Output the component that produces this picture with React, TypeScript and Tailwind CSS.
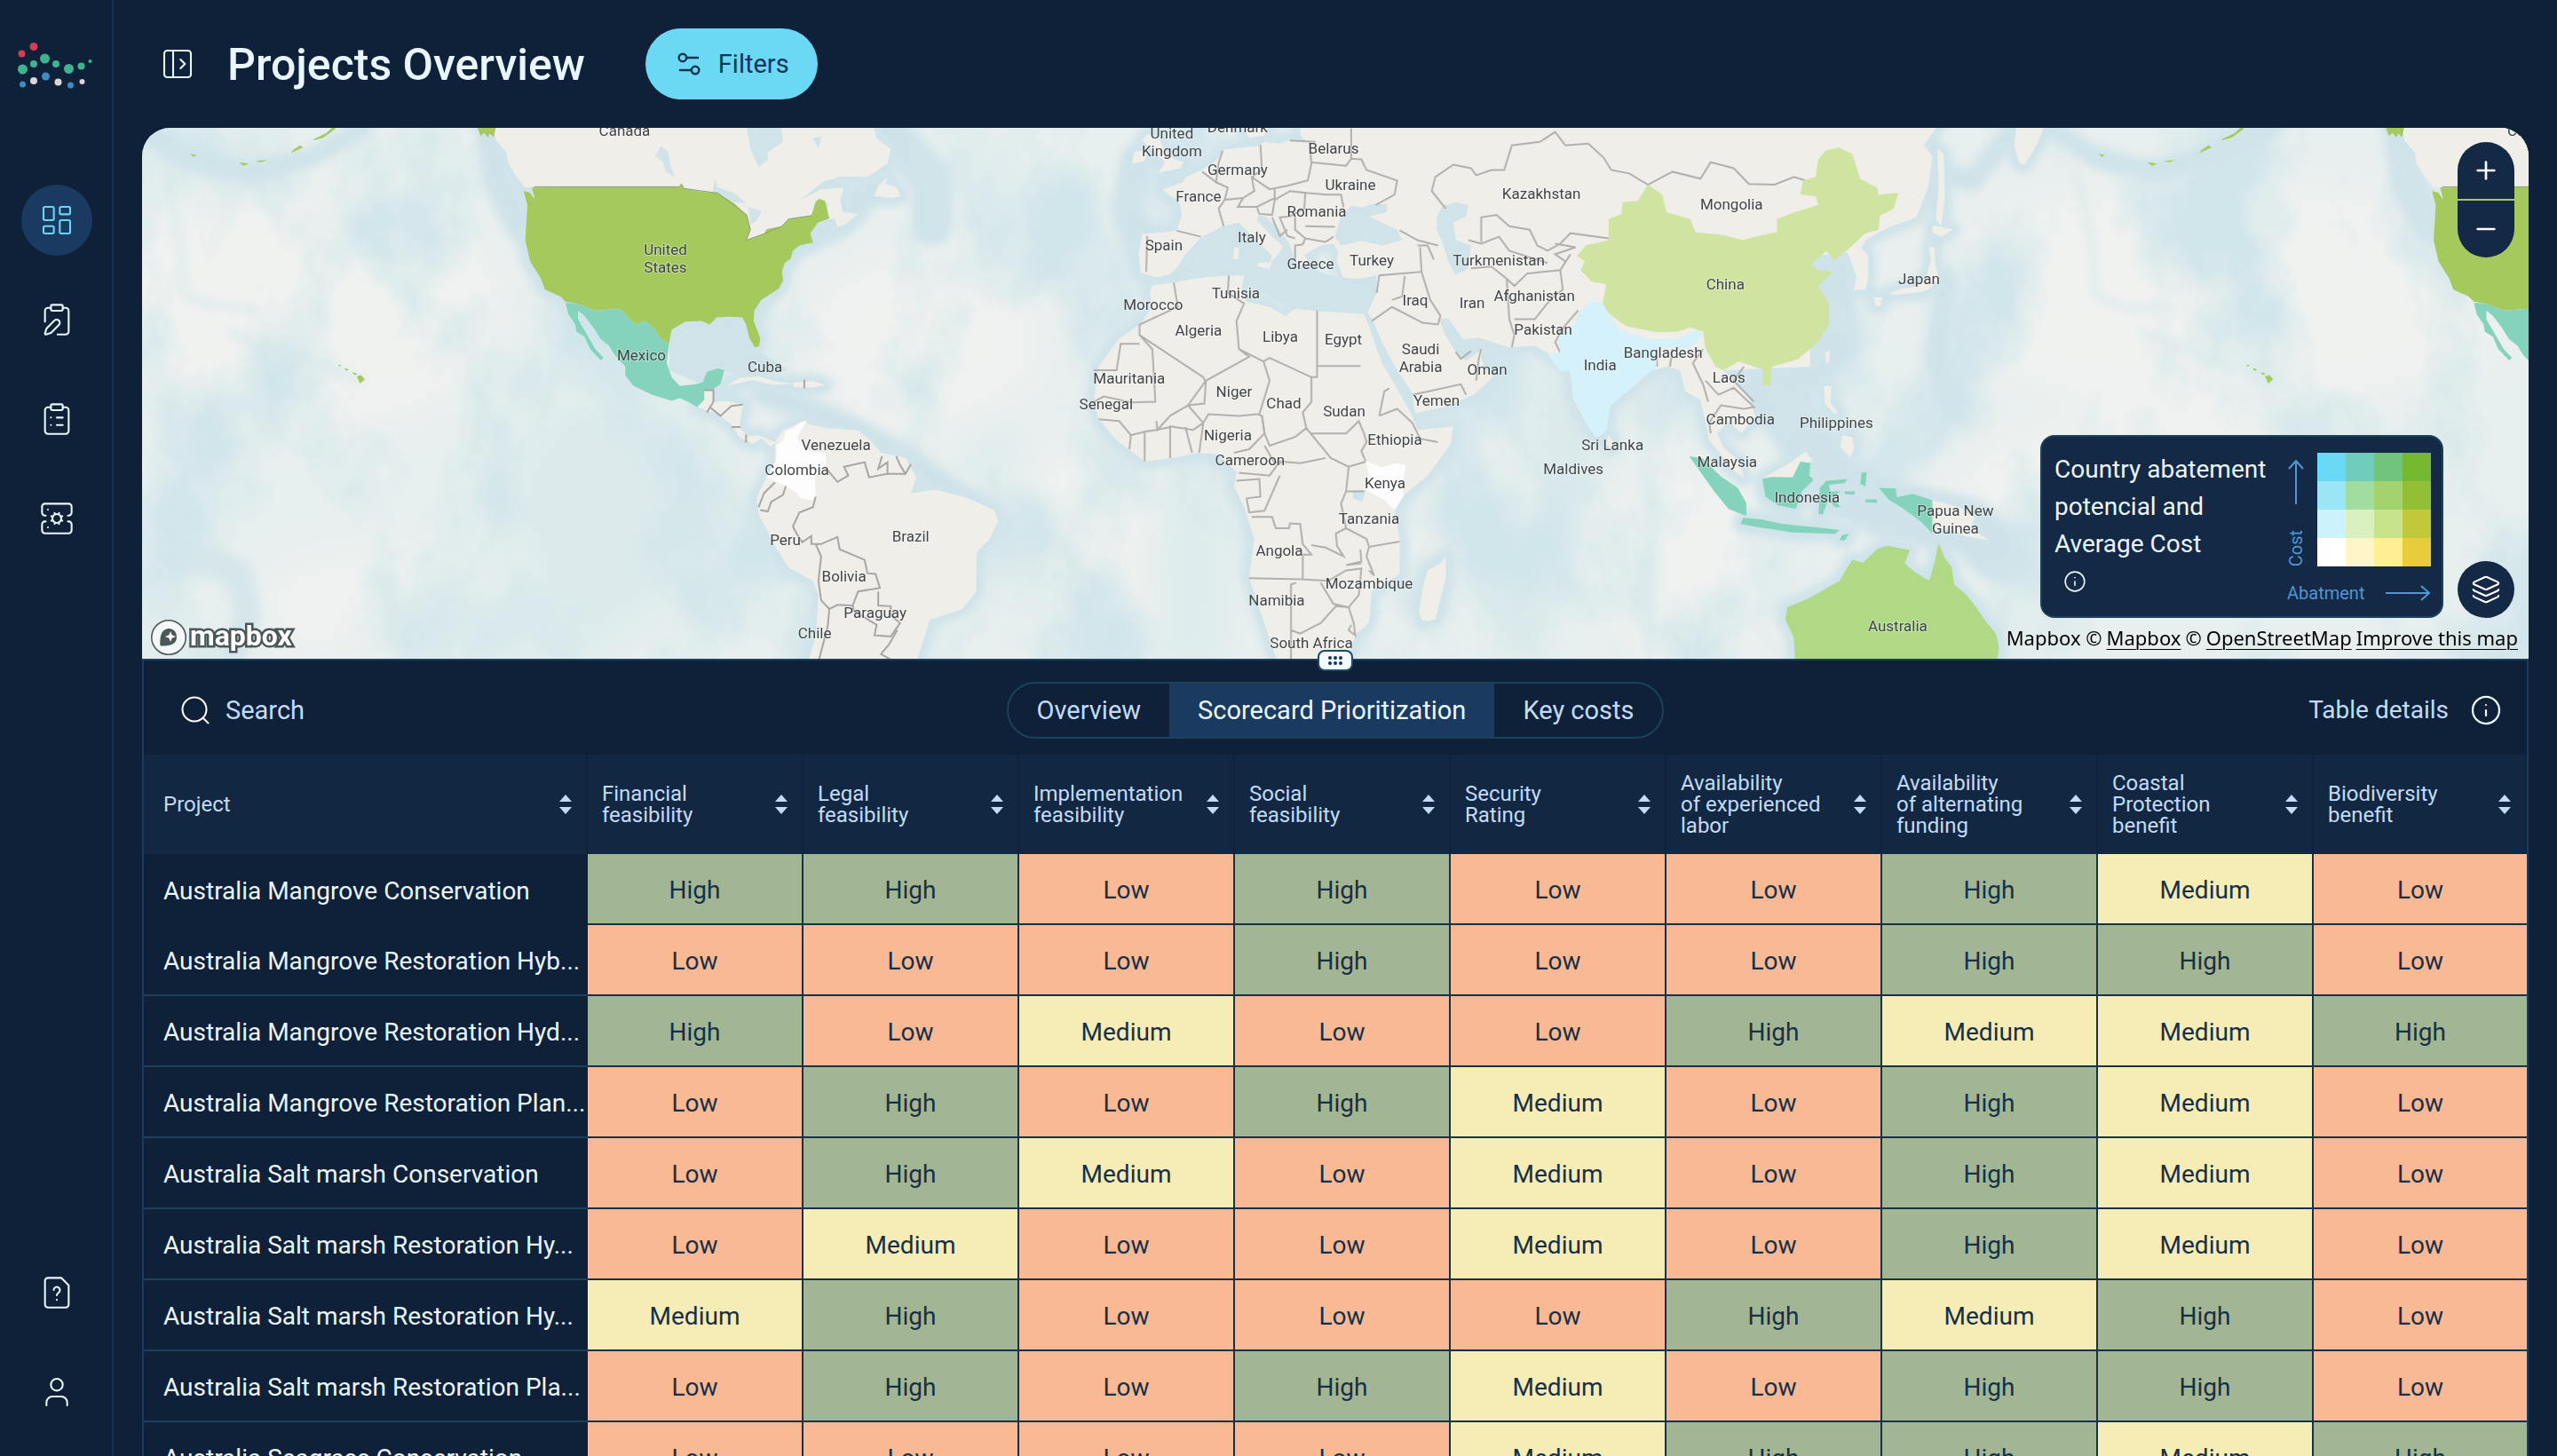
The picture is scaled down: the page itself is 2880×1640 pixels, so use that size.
import type { ReactNode } from "react";
import clsx from "clsx";
import {
  ClipboardList,
  ClipboardPen,
  Info,
  Layers,
  LayoutDashboard,
  Minus,
  PanelLeftOpen,
  Plus,
  ServerCog,
  Settings2,
  User,
} from "lucide-react";

type Rating = "High" | "Medium" | "Low";

const COLUMNS: string[][] = [
  ["Financial", "feasibility"],
  ["Legal", "feasibility"],
  ["Implementation", "feasibility"],
  ["Social", "feasibility"],
  ["Security", "Rating"],
  ["Availability", "of experienced", "labor"],
  ["Availability", "of alternating", "funding"],
  ["Coastal", "Protection", "benefit"],
  ["Biodiversity", "benefit"],
];

const H: Rating = "High";
const M: Rating = "Medium";
const L: Rating = "Low";

const PROJECTS: { name: string; scores: Rating[] }[] = [
  { name: "Australia Mangrove Conservation", scores: [H, H, L, H, L, L, H, M, L] },
  { name: "Australia Mangrove Restoration Hyb...", scores: [L, L, L, H, L, L, H, H, L] },
  { name: "Australia Mangrove Restoration Hyd...", scores: [H, L, M, L, L, H, M, M, H] },
  { name: "Australia Mangrove Restoration Plan...", scores: [L, H, L, H, M, L, H, M, L] },
  { name: "Australia Salt marsh Conservation", scores: [L, H, M, L, M, L, H, M, L] },
  { name: "Australia Salt marsh Restoration Hy...", scores: [L, M, L, L, M, L, H, M, L] },
  { name: "Australia Salt marsh Restoration Hy...", scores: [M, H, L, L, L, H, M, H, L] },
  { name: "Australia Salt marsh Restoration Pla...", scores: [L, H, L, H, M, L, H, H, L] },
  { name: "Australia Seagrass Conservation", scores: [L, L, L, L, M, H, H, M, H] },
];

const RATING_CLASS: Record<Rating, string> = {
  High: "bg-[#a3b693]",
  Medium: "bg-[#f5ecb6]",
  Low: "bg-[#f8b994]",
};

const LEGEND_CELLS = [
  "bg-[#69d8f4]", "bg-[#70ccbd]", "bg-[#70c47b]", "bg-[#74b930]",
  "bg-[#9be6f6]", "bg-[#a0dd9f]", "bg-[#a2d36f]", "bg-[#92bf36]",
  "bg-[#cbf2fd]", "bg-[#d9f0c1]", "bg-[#c9e38d]", "bg-[#c2c83a]",
  "bg-white", "bg-[#fff5c9]", "bg-[#ffee92]", "bg-[#e9cc3b]",
];

// x, y of the label centre on the 2688x598 map canvas, then its lines
const MAP_LABELS: [number, number, ...string[]][] = [
  [544, 3, "Canada"],
  [590, 137, "United", "States"],
  [563, 256, "Mexico"],
  [702, 269, "Cuba"],
  [782, 357, "Venezuela"],
  [738, 385, "Colombia"],
  [725, 464, "Peru"],
  [866, 460, "Brazil"],
  [791, 505, "Bolivia"],
  [826, 546, "Paraguay"],
  [758, 569, "Chile"],
  [1160, 6, "United", "Kingdom"],
  [1234, -1, "Denmark"],
  [1342, 23, "Belarus"],
  [1234, 47, "Germany"],
  [1361, 64, "Ukraine"],
  [1190, 77, "France"],
  [1323, 94, "Romania"],
  [1250, 123, "Italy"],
  [1151, 132, "Spain"],
  [1316, 153, "Greece"],
  [1385, 149, "Turkey"],
  [1576, 74, "Kazakhstan"],
  [1790, 86, "Mongolia"],
  [1528, 149, "Turkmenistan"],
  [1783, 176, "China"],
  [1232, 186, "Tunisia"],
  [1139, 199, "Morocco"],
  [1434, 194, "Iraq"],
  [1498, 197, "Iran"],
  [1568, 189, "Afghanistan"],
  [1578, 227, "Pakistan"],
  [1190, 228, "Algeria"],
  [1282, 235, "Libya"],
  [1353, 238, "Egypt"],
  [1440, 249, "Saudi", "Arabia"],
  [1515, 272, "Oman"],
  [1642, 267, "India"],
  [1713, 253, "Bangladesh"],
  [1787, 281, "Laos"],
  [1112, 282, "Mauritania"],
  [1230, 297, "Niger"],
  [1286, 310, "Chad"],
  [1458, 307, "Yemen"],
  [1086, 311, "Senegal"],
  [1354, 319, "Sudan"],
  [1800, 328, "Cambodia"],
  [1223, 346, "Nigeria"],
  [1411, 351, "Ethiopia"],
  [1656, 357, "Sri Lanka"],
  [1785, 376, "Malaysia"],
  [1248, 374, "Cameroon"],
  [1612, 384, "Maldives"],
  [1400, 400, "Kenya"],
  [1382, 440, "Tanzania"],
  [1281, 476, "Angola"],
  [1382, 513, "Mozambique"],
  [1278, 532, "Namibia"],
  [1317, 580, "South Africa"],
  [2001, 170, "Japan"],
  [1908, 332, "Philippines"],
  [1875, 416, "Indonesia"],
  [2042, 431, "Papua New", "Guinea"],
  [1977, 561, "Australia"],
  [2692, 3, "Canada"],
];

// Each tile keeps its own drawing units and is placed with a transform.
const WEST = "translate(0 -4) scale(.6122 .3954)";
const WEST_WRAP = "translate(2148 -4) scale(.6122 .3954)";
const CENTER = "translate(960 -4) scale(.574 .3954)";
const EAST = "translate(1800 -4) scale(.5867 .3954)";

const WEST_LAND = [
  "M645 0L652 45L660 60L672 80L674 110L690 150L706 180L722 178L990 178L1060 196L1115 260L1112 330L1145 312L1178 290L1232 262L1240 215L1262 225L1262 272L1275 268L1280 292L1295 285L1318 255L1290 250L1285 215L1292 180L1250 185L1210 218L1252 165L1285 148L1335 150L1372 112L1378 70L1352 40L1345 0Z",
  "M1372 150L1368 170L1388 178L1396 205L1380 210L1348 205L1355 175Z",
  "M1035 757L1052 757L1050 790L1078 788L1106 798L1100 862L1112 888L1135 885L1165 905L1158 918L1140 895L1125 910L1100 890L1085 855L1060 825L1022 805L1028 780Z",
  "M1075 745L1100 722L1135 718L1165 732L1198 738L1160 742L1125 728L1095 738Z",
  "M1198 735L1235 732L1258 742L1235 750L1200 748Z",
  "M1165 905L1180 870L1220 845L1230 855L1262 865L1318 872L1340 900L1360 935L1405 950L1425 1005L1415 1050L1460 1040L1520 1065L1568 1098L1576 1130L1560 1180L1536 1220L1535 1330L1510 1380L1450 1410L1440 1460L1425 1530L1226 1530L1240 1460L1245 1340L1235 1300L1190 1262L1165 1200L1135 1110L1132 1060L1148 1010L1165 960Z",
];

const USA =
  "M703 190L714 194L724 215L718 180L990 178L993 170L998 183L1030 192L1060 196L1090 225L1113 258L1120 300L1112 330L1145 312L1150 298L1178 290L1190 270L1215 264L1232 260L1240 222L1246 212L1257 218L1265 268L1244 280L1230 310L1235 337L1210 345L1198 360L1194 382L1183 395L1178 420L1180 445L1172 468L1140 500L1127 530L1126 560L1138 610L1136 632L1128 635L1118 608L1112 570L1105 550L1080 548L1058 550L1045 570L1030 560L1000 562L975 585L970 625L955 610L940 575L925 560L910 570L895 550L880 525L835 530L800 510L780 505L770 490L742 470L735 440L715 390L706 330L710 230Z";

const MEXICO =
  "M780 508L800 510L835 530L880 525L895 550L910 570L925 560L940 575L955 610L970 625L966 680L975 720L990 745L1020 740L1032 735L1040 705L1060 695L1072 700L1065 740L1050 755L1035 757L1035 785L1022 805L1005 790L990 780L975 787L940 770L905 745L890 715L890 690L870 655L860 630L845 612L832 580L815 545L803 530L803 555L820 600L835 640L850 665L845 672L825 640L815 605L800 590L798 570L785 540Z";

const COLOMBIA =
  "M1224 843L1210 850L1200 865L1185 873L1180 900L1168 915L1168 955L1150 1005L1180 1026L1205 1048L1212 1064L1232 1070L1240 1060L1238 1000L1260 985L1258 935L1235 932L1215 915L1206 890Z";

const WEST_BORDERS = [
  "M1035 757L1052 757L1052 790L1040 820M1045 805L1065 830L1085 802L1106 798M1085 862L1102 862M1112 884L1112 906M1219 727L1219 752",
  "M1262 985L1280 1018L1300 1000L1292 975L1330 962L1338 1005L1372 995L1372 962L1355 980L1362 945M1388 945L1395 970L1405 995L1415 968M1372 995L1405 995",
  "M1138 1098L1152 1102L1158 1075L1180 1055L1185 1030M1135 1090L1145 1050L1165 1020M1240 1060L1235 1090L1210 1105L1198 1145L1205 1165L1215 1190L1232 1172L1232 1195L1250 1195L1280 1175L1284 1210L1330 1240L1335 1278L1350 1280L1358 1320L1318 1330L1308 1370L1280 1368L1265 1380L1250 1355L1245 1300L1250 1230L1240 1195",
  "M1355 1330L1355 1370L1378 1372L1378 1398L1395 1420L1378 1458L1348 1455L1352 1425L1310 1385L1308 1370M1390 1440L1375 1480L1360 1508L1385 1530M1265 1380L1262 1430L1245 1530",
];

const ALASKA = [
  "M352 8L340 25L318 42L316 46L335 38L358 12Z",
  "M292 60L298 66L275 82L280 72ZM90 84L102 88L96 93ZM138 106L142 110ZM180 108L198 112L188 118ZM210 104L232 102L220 108Z",
  "M618 8L652 8L648 36L640 26L638 38L630 24L624 34Z",
  "M396 718L404 714L411 726L402 738ZM374 694L382 698L376 702ZM388 706L398 710L392 714ZM362 684L368 686L364 690Z",
];

const CENTER_LAND = [
  "M600 0L600 30L610 48L575 46L560 55L530 50L520 62L490 65L450 72L442 90L430 110L400 135L375 150L370 165L330 185L345 205L362 215L368 258L358 303L290 312L283 370L287 422L318 436L345 426L358 408L375 370L405 322L448 290L480 280L500 310L545 375L540 395L556 372L566 348L540 312L515 275L518 258L532 262L560 300L578 338L590 388L608 408L620 400L608 372L640 345L665 340L675 362L672 390L684 436L715 440L750 430L750 480L732 535L745 565L760 620L790 700L820 765L825 822L880 806L940 770L978 720L960 690L955 665L958 640L925 672L910 660L885 600L872 555L890 552L920 612L950 608L1010 635L1060 630L1090 655L1110 685L1130 700L1135 780L1160 850L1180 890L1200 870L1208 800L1250 750L1290 700L1320 690L1345 700L1355 760L1385 785L1395 850L1402 900L1420 930L1440 975L1470 1008L1462 960L1430 920L1418 880L1440 845L1465 880L1493 830L1480 780L1450 730L1430 700L1600 690L1600 0Z",
  "M310 458L355 450L400 438L460 430L490 430L485 470L495 505L540 520L570 545L590 525L640 532L725 540L735 575L760 680L785 740L820 830L830 870L900 860L895 910L850 1000L800 1060L785 1100L795 1180L795 1280L740 1330L735 1420L710 1450L690 1530L555 1530L525 1400L500 1290L510 1180L490 1090L470 1030L475 990L440 940L400 935L350 950L295 960L240 900L205 840L195 790L205 690L245 610L285 570L310 520L305 480Z",
  "M885 1230L886 1290L865 1410L840 1415L833 1390L840 1320L850 1270L875 1250Z",
  "M290 45L300 28L322 35L330 62L345 95L372 108L365 125L322 138L335 108L315 80Z",
  "M275 78L302 72L295 105L270 112Z",
  "M490 10L535 8L530 32L500 40Z",
  "M515 395L545 392L538 412L518 405ZM470 350L480 350L478 385L468 382Z",
  "M1205 885L1214 905L1208 925L1200 910Z",
];

const CENTER_WATER = [
  "M668 320L680 262L700 232L722 236L742 226L770 228L770 250L735 262L790 300L800 330L760 345L720 332L680 345Z",
  "M868 262L880 232L905 222L930 230L925 262L900 280L905 330L935 345L930 410L905 428L890 390L880 340L868 300Z",
  "M702 1042L728 1042L722 1075L704 1066Z",
];

const CHINA =
  "M1143 375L1160 345L1205 330L1205 270L1230 255L1232 222L1262 218L1282 172L1310 200L1318 250L1365 270L1375 308L1430 315L1468 330L1504 316L1535 308L1535 270L1570 250L1616 230L1611 205L1581 200L1586 160L1611 150L1616 100L1630 75L1657 66L1683 85L1698 155L1731 180L1734 200L1773 195L1764 240L1737 260L1734 300L1708 310L1683 345L1667 365L1647 388L1632 360L1601 400L1616 415L1645 420L1616 460L1637 510L1637 570L1616 620L1575 670L1525 690L1522 742L1506 745L1508 698L1480 685L1460 675L1430 700L1415 690L1395 640L1390 590L1365 578L1340 590L1300 592L1240 575L1215 550L1192 520L1200 455L1172 448L1150 415L1158 390Z";

const INDIA =
  "M1170 505L1192 508L1210 550L1225 585L1285 612L1340 612L1378 585L1390 600L1362 640L1330 636L1300 640L1298 690L1250 750L1208 800L1200 870L1186 890L1176 882L1160 850L1138 780L1128 700L1110 705L1085 655L1110 650L1105 610L1135 575L1150 530Z";

const KENYA = "M728 958L760 976L790 965L807 970L800 1040L803 1058L785 1098L765 1070L727 1040L735 1000Z";

const SUMATRA = "M1363 945L1388 950L1425 1002L1458 1035L1475 1078L1475 1115L1440 1095L1412 1045L1385 990Z";

const CENTER_BORDERS = [
  "M300 318L298 420M358 303L405 320M448 75L440 110L435 165L408 135M435 165L458 180L452 215L488 210L510 190L505 150L525 130L522 58M505 150L540 185L575 175L615 160L622 112L618 48M452 215L440 240L450 290M488 210L478 235L515 235L550 210L550 185M515 235L520 255L545 258L550 215L580 190L610 195L608 240L580 262L560 265L575 318L590 325M610 195L650 200L680 200L685 236M620 108L690 118L700 98L720 100L730 130L790 160L785 200L748 230M700 12L700 98M580 46L630 50",
  "M590 262L590 300L610 325L605 342L590 345L590 385M610 290L668 292M610 325L650 335L665 320M545 265L560 318L575 300",
  "M460 430L458 480L490 510L475 560L480 640L500 662L415 730L380 800M352 450L360 520L285 570L285 600L410 720M285 625L248 625L240 700L195 700M285 600L310 640L316 790L270 792L215 775L195 790M410 720L415 735L412 795L380 800L345 830L320 870L318 845M633 530L633 720L622 720L540 665L528 675L480 640M633 688L718 688M622 720L622 790L605 820L612 865L590 890L540 915L530 880L525 830L515 825L480 830L420 825L410 850L402 935M528 675L540 730L520 825M755 830L765 760L775 752M622 880L690 880L715 845L725 880L730 905L720 930L728 958",
  "M380 800L410 850M410 850L390 870L345 860L345 950M375 862L388 935M295 960L295 875L318 870L345 862M295 875L268 885L245 845L205 840M268 885L265 925M755 830L790 810L820 850L835 895L870 905M612 865L660 950L695 975L730 960M525 830L530 880L500 925L470 935M530 915L550 965L560 960L600 965L650 950M480 992L540 1000L555 970L565 960M475 1015L520 1010L522 1060L495 1065L500 1105L530 1100L560 1000M505 1118L545 1118L552 1150L578 1150L580 1136L600 1138L605 1195L622 1225L605 1225L605 1295L500 1292M695 975L690 1045L725 1045M690 1045L680 1080L690 1150L670 1165L672 1200L685 1230L650 1205L622 1198M690 1150L730 1180L735 1203L795 1188M605 1295L655 1300L690 1270L720 1265L715 1340L695 1375L670 1372L640 1420L600 1450L582 1440L582 1310L592 1305M640 1305L665 1365L695 1375L705 1420L708 1455L695 1440L700 1425M582 1440L582 1530M720 1250L690 1255L720 1245L718 1210M735 1203L730 1230L745 1285L735 1270",
  "M835 350L838 420L755 430L750 480M838 420L855 500L875 545L870 570L840 565L780 520L740 560M805 432L800 490L780 500M935 645L915 668L905 648M955 640L950 668L945 730M820 770L915 740L925 770M795 302L830 330L870 345M830 345L850 345L862 385",
  "M885 240L858 190L865 150L900 115L935 125L945 145L975 130L1000 130L1015 60L1070 50L1100 22L1120 60L1165 55L1195 95L1210 130L1245 140L1282 172L1330 135L1385 155L1405 108L1450 125L1480 170L1530 172L1568 150L1590 160",
  "M955 335L955 265L985 258L1010 290L1050 300L1065 345L1085 360L1110 340L1130 310L1205 325M1100 340L1140 350L1100 370L1120 390M930 330L955 340L990 320L1010 360L1085 395M935 410L975 405L1005 440L1020 460L1045 425L1110 415L1130 370M1005 440L1010 555L1020 600L1015 635M1020 555L1060 555L1090 500L1115 470L1110 415M1145 530L1115 580L1100 620L1110 650M1298 640L1300 690M1330 640L1325 690M1390 640L1370 680L1390 740L1400 790M1395 730L1420 770L1450 750L1490 805L1470 810L1425 800L1402 850L1405 880M1470 690L1450 730L1490 790",
];

const EAST_LAND = [
  "M-40 0L380 0L352 60L368 90L365 130L360 180L338 262L320 275L290 290L262 310L240 330L232 352L245 375L245 440L240 470L218 472L222 430L215 400L205 365L-40 400Z",
  "M530 0L585 0L568 60L545 115L535 112L525 60Z",
  "M378 70L390 85L392 210L385 290L375 270L380 180Z",
  "M368 288L380 290L408 300L385 320L368 308Z",
  "M362 348L372 350L374 400L380 440L362 470L345 478L300 485L282 482L310 468L340 462L356 435L365 390Z",
  "M256 492L272 492L268 520L258 515Z",
  "M162 648L172 645L170 672L165 685Z",
  "M160 745L175 745L172 790L188 825L178 822L162 795Z",
  "M195 885L215 890L218 925L210 948L192 920Z",
  "M48 1002L92 968L125 930L138 958L115 968L100 1005L60 1008Z",
  "M368 1070L420 1090L450 1120L440 1150L478 1185L430 1172L400 1150L368 1160Z",
];

const INDONESIA = [
  "M42 1010L60 1004L100 1005L115 960L134 965L132 1000L140 1012L118 1045L106 1095L72 1085L48 1060Z",
  "M5 1120L40 1125L82 1138L150 1148L190 1155L182 1166L100 1162L30 1146L0 1138Z",
  "M152 1035L165 1015L205 1010L200 1022L170 1026L172 1045L192 1045L176 1060L192 1090L182 1090L168 1070L158 1110L150 1110Z",
  "M265 1035L298 1037L300 1062L330 1052L368 1070L368 1165L345 1130L310 1092L285 1070Z",
  "M232 992L242 990L240 1030L230 1025ZM195 1170L208 1165L200 1185L190 1184ZM200 1045L220 1045L218 1055L200 1052ZM240 1068L262 1068L262 1078L240 1076Z",
];

const AUSTRALIA =
  "M90 1375L130 1350L190 1300L205 1262L215 1240L235 1248L262 1210L280 1200L325 1212L315 1250L335 1275L362 1300L372 1250L380 1192L392 1235L405 1260L410 1310L430 1335L450 1370L468 1410L490 1450L496 1490L492 1530L105 1530L102 1460L86 1410Z";

function Paths({ d }: { d: string[] }) {
  return d.map((path) => <path key={path} d={path} vectorEffect="non-scaling-stroke" />);
}

function AmericasTile({ transform }: { transform: string }) {
  return (
    <g transform={transform}>
      <g fill="#f0eee9">
        <Paths d={WEST_LAND} />
      </g>
      <g fill="#cfe3e9">
        <path d="M1112 0L1120 70L1135 122L1152 100L1152 80L1180 50L1175 0Z" />
        <path d="M955 62L968 75L972 110L980 150L965 135L958 105L945 90Z" />
        <path d="M1050 196L1055 155L1060 180L1090 195L1112 225L1090 222ZM1116 235L1140 248L1132 275L1120 285Z" />
        <path d="M1235 40L1250 35L1245 70Z" />
      </g>
      <path d={USA} fill="#a5c95c" />
      <path d="M722 178L990 178L993 170L998 183L1060 196L1113 258L1120 300L1112 330L1145 312L1178 290L1190 270L1232 260" fill="none" stroke="#8f9c7c" strokeWidth="1" vectorEffect="non-scaling-stroke" />
      <path d={MEXICO} fill="#86d3bd" />
      <path d={COLOMBIA} fill="#fdfdfd" />
      <g fill="#a5c95c">
        <Paths d={ALASKA} />
      </g>
      <g fill="none" stroke="#a9a5a5" strokeWidth="2">
        <Paths d={WEST_BORDERS} />
      </g>
    </g>
  );
}

// Ocean floor: deep plains, mottled relief, ridges, then the coastal shelf.
function Seabed() {
  return (
    <g>
      <g filter="url(#soft-wide)">
        <g fill="#f0f2f0">
          <ellipse cx="190" cy="200" rx="220" ry="140" />
          <ellipse cx="880" cy="240" rx="130" ry="100" />
          <ellipse cx="1060" cy="480" rx="120" ry="110" />
          <ellipse cx="2340" cy="190" rx="330" ry="130" />
          <ellipse cx="260" cy="540" rx="130" ry="60" />
          <ellipse cx="1740" cy="500" rx="90" ry="120" />
          <ellipse cx="1480" cy="460" rx="50" ry="80" />
          <ellipse cx="2240" cy="400" rx="200" ry="70" />
        </g>
        <g fill="#dceaec">
          <ellipse cx="540" cy="420" rx="130" ry="130" />
          <ellipse cx="400" cy="560" rx="160" ry="40" />
          <ellipse cx="960" cy="440" rx="24" ry="120" />
          <ellipse cx="1180" cy="500" rx="36" ry="140" />
          <ellipse cx="1600" cy="340" rx="50" ry="90" />
          <ellipse cx="1550" cy="520" rx="36" ry="100" />
        </g>
      </g>
      <rect width="2688" height="598" filter="url(#relief)" />
      <g filter="url(#soft-mid)" fill="none" stroke="#cfe3e9" strokeLinecap="round" strokeLinejoin="round">
        <path d="M0 0L50 34L120 50L190 34L250 0" strokeWidth="22" />
        <path d="M2150 0L2200 34L2268 48L2340 28L2400 0" strokeWidth="22" />
        <path d="M392 0L402 60L428 110M2540 0L2550 60L2576 110" strokeWidth="36" />
        <path d="M26 50L44 130L50 190L80 200L130 205M50 360L70 410" strokeWidth="6" stroke="#d8e8eb" />
        <path d="M100 230L150 250L200 265L250 285" strokeWidth="6" stroke="#d6e6ea" />
        <path d="M2178 50L2196 130L2200 190L2240 205L2280 200M2250 230L2350 268L2400 285" strokeWidth="6" stroke="#d8e8eb" />
        <path d="M700 300L760 320L860 370L940 430" strokeWidth="28" />
        <path d="M620 240L640 210L680 215L700 180L730 130L780 110L830 60" strokeWidth="34" />
        <path d="M840 0L890 60L890 110" strokeWidth="46" />
        <path d="M60 480L110 500L120 550L100 598" strokeWidth="30" stroke="#d6e6ea" />
        <path d="M1120 40L1110 90L1130 150L1170 190M1230 130L1260 160L1330 200L1390 190" strokeWidth="36" />
        <path d="M1830 300L1860 330L1900 400L1960 430L2060 450L2090 480" strokeWidth="64" />
        <path d="M1900 150L1910 240L1870 280" strokeWidth="50" />
        <path d="M1990 40L2060 60L2110 0M2030 170L2020 260L2040 320" strokeWidth="24" />
        <path d="M1620 300L1612 400L1590 520M1700 400L1698 596" strokeWidth="8" stroke="#d8e8eb" />
      </g>
      <g filter="url(#soft)" fill="none" stroke="#cfe3e9" strokeWidth="18" strokeLinejoin="round">
        <g transform={WEST}>
          <Paths d={WEST_LAND} />
          <path d={USA} vectorEffect="non-scaling-stroke" />
        </g>
        <g transform={CENTER}>
          <Paths d={CENTER_LAND} />
        </g>
        <g transform={EAST}>
          <Paths d={EAST_LAND} />
          <Paths d={INDONESIA} />
          <path d={AUSTRALIA} vectorEffect="non-scaling-stroke" />
        </g>
      </g>
      <g fill="#cfe3e9">
        <path transform={CENTER} d="M370 420L405 322L448 290L500 300L600 400L680 440L750 440L735 540L590 530L480 440Z" />
        <path transform={WEST} d="M975 590L1050 560L1110 570L1130 640L1190 700L1130 720L1070 700L1030 740L970 700Z" />
      </g>
    </g>
  );
}

function WorldMap() {
  return (
    <svg
      viewBox="0 0 2688 598"
      preserveAspectRatio="xMidYMid slice"
      className="block h-full w-full bg-[#e8efef]"
      role="img"
      aria-label="World map of abatement potential"
    >
      <defs>
        <filter id="soft" x="-10%" y="-10%" width="120%" height="120%">
          <feGaussianBlur stdDeviation="4" />
        </filter>
        <filter id="soft-mid" x="-10%" y="-10%" width="120%" height="120%">
          <feGaussianBlur stdDeviation="6" />
        </filter>
        <filter id="soft-wide" x="-20%" y="-20%" width="140%" height="140%">
          <feGaussianBlur stdDeviation="26" />
        </filter>
        <filter id="relief" x="0" y="0" width="100%" height="100%" colorInterpolationFilters="sRGB">
          <feTurbulence type="fractalNoise" baseFrequency="0.007 0.005" numOctaves="5" seed="7" />
          <feColorMatrix values="0 0 0 0 0.82  0 0 0 0 0.9  0 0 0 0 0.92  3.5 0 0 0 -1.6" />
        </filter>
      </defs>
      <Seabed />
      <AmericasTile transform={WEST} />
      <AmericasTile transform={WEST_WRAP} />
      <g transform={CENTER}>
        <g fill="#f0eee9">
          <Paths d={CENTER_LAND} />
        </g>
        <g fill="#cfe3e9">
          <Paths d={CENTER_WATER} />
        </g>
      </g>
      <g transform={EAST}>
        <g fill="#f0eee9">
          <Paths d={EAST_LAND} />
        </g>
        <g fill="#86d3bd">
          <Paths d={INDONESIA} />
        </g>
        <path d={AUSTRALIA} fill="#b0d986" />
      </g>
      <g transform={CENTER}>
        <g fill="none" stroke="#b3afae" strokeWidth="2">
          <Paths d={CENTER_BORDERS} />
        </g>
        <path d={CHINA} fill="#cfe4a0" />
        <path d={INDIA} fill="#d5f1fb" />
        <path d={KENYA} fill="#fdfdfd" />
        <path d={SUMATRA} fill="#86d3bd" />
      </g>
      <g
        className="font-['Roboto',sans-serif] text-[17px]"
        fill="#404548"
        stroke="#ffffff"
        strokeOpacity="0.35"
        strokeWidth="2"
        paintOrder="stroke"
        textAnchor="middle"
        dominantBaseline="central"
      >
        {MAP_LABELS.map(([x, y, ...lines]) =>
          lines.map((line, i) => (
            <text key={`${x}-${line}`} x={x} y={y + i * 20}>
              {line}
            </text>
          )),
        )}
      </g>
    </svg>
  );
}

function Logo() {
  return (
    <svg viewBox="20 46 88 56" className="h-14 w-22" aria-hidden="true">
      <g fill="#d63d53">
        <circle cx="38" cy="52.500" r="4.500" />
        <circle cx="24.500" cy="60.500" r="4" />
      </g>
      <g fill="#3fb391">
        <circle cx="50.500" cy="66" r="5.500" />
        <circle cx="38" cy="72" r="4" />
        <circle cx="25.500" cy="78" r="5.500" />
        <circle cx="63" cy="72" r="4" />
        <circle cx="77.500" cy="77.500" r="5.500" />
        <circle cx="91.500" cy="74.500" r="4" />
        <circle cx="101.500" cy="69" r="2" />
      </g>
      <g fill="#3d8dc4">
        <circle cx="51.500" cy="86" r="4.500" />
        <circle cx="25.500" cy="95" r="3.500" />
        <circle cx="79.500" cy="96" r="3.500" />
      </g>
      <g fill="#dcd3dc">
        <circle cx="38" cy="91" r="4" />
        <circle cx="65.500" cy="92.500" r="4" />
        <circle cx="92.500" cy="92" r="3" />
      </g>
    </svg>
  );
}

function FileHelpIcon() {
  return (
    <svg
      viewBox="0 0 24 24"
      className="size-10"
      fill="none"
      stroke="currentColor"
      strokeWidth="1.25"
      strokeLinecap="round"
      strokeLinejoin="round"
    >
      <path d="M15 2H6a2 2 0 0 0-2 2v16a2 2 0 0 0 2 2h12a2 2 0 0 0 2-2V7Z" />
      <path d="M9.900 10.200a2.100 2.100 0 1 1 3.400 1.700c-.800.600-1.300.900-1.300 1.900M12 16.800v.1" />
    </svg>
  );
}

function NavButton({ label, active, children }: { label: string; active?: boolean; children: ReactNode }) {
  return (
    <button
      type="button"
      aria-label={label}
      className={clsx(
        "flex size-20 items-center justify-center rounded-full",
        active ? "bg-[#1a3a62] text-[#6bd7f3]" : "text-[#e9f6ff]",
      )}
    >
      {children}
    </button>
  );
}

function Sidebar() {
  return (
    <aside className="flex w-32 shrink-0 flex-col items-center border-r-2 border-[#15335a] pt-[46px] pb-8 pl-0.5">
      <Logo />
      <nav className="flex flex-1 flex-col justify-between pt-[106px]">
        <div className="flex flex-col gap-8">
          <NavButton label="Overview" active>
            <LayoutDashboard size={40} strokeWidth={1.25} />
          </NavButton>
          <NavButton label="Custom project">
            <ClipboardPen size={40} strokeWidth={1.25} />
          </NavButton>
          <NavButton label="My projects">
            <ClipboardList size={40} strokeWidth={1.25} />
          </NavButton>
          <NavButton label="Model settings">
            <ServerCog size={40} strokeWidth={1.25} />
          </NavButton>
        </div>
        <div className="flex flex-col gap-8">
          <NavButton label="Help">
            <FileHelpIcon />
          </NavButton>
          <NavButton label="Account">
            <User size={40} strokeWidth={1.25} />
          </NavButton>
        </div>
      </nav>
    </aside>
  );
}

function Legend() {
  return (
    <div className="flex w-[454px] justify-between rounded-2xl border-2 border-[#1c4258] bg-[#132945] pt-4 pr-3 pb-3.5 pl-3.5 text-[#e9f6ff]">
      <div className="pb-1 text-[28px] leading-[42px]">
        Country abatement
        <br />
        potencial and
        <br />
        Average Cost
        <button type="button" aria-label="About the legend" className="ml-2.5 flex h-[42px] items-center">
          <Info size={26} strokeWidth={1.5} />
        </button>
      </div>
      <div className="flex flex-col justify-between pt-0.5 text-xl leading-6 text-[#5296d3]">
        <div className="flex justify-end gap-3.5">
          <div className="flex w-5 flex-col items-center justify-between pt-2">
            <svg viewBox="0 0 20 50" className="h-[50px] w-5" fill="none" stroke="currentColor" strokeWidth="2">
              <path d="M10 50V1M2 10L10 1L18 10" />
            </svg>
            <span className="rotate-180 leading-5 [writing-mode:vertical-rl]">Cost</span>
          </div>
          <div className="grid grid-cols-4">
            {LEGEND_CELLS.map((cell) => (
              <div key={cell} className={clsx("size-8", cell)} />
            ))}
          </div>
        </div>
        <div className="flex items-center gap-6">
          Abatment
          <svg viewBox="0 0 50 20" className="h-5 w-[50px]" fill="none" stroke="currentColor" strokeWidth="2">
            <path d="M0 10H49M40 2L49 10L40 18" />
          </svg>
        </div>
      </div>
    </div>
  );
}

function MapPanel() {
  return (
    <section className="relative min-h-0 shrink-0 basis-[40%] overflow-hidden rounded-t-[32px]">
      <WorldMap />

      <div className="absolute top-4 right-4 flex flex-col gap-0.5 text-white">
        <button type="button" aria-label="Zoom in" className="flex size-16 items-center justify-center rounded-t-full bg-[#132945]">
          <Plus size={32} strokeWidth={2} />
        </button>
        <button type="button" aria-label="Zoom out" className="flex size-16 items-center justify-center rounded-b-full bg-[#132945]">
          <Minus size={32} strokeWidth={2} />
        </button>
      </div>

      <div className="absolute right-4 bottom-[46px] flex items-end gap-4">
        <Legend />
        <button type="button" aria-label="Layers" className="flex size-16 items-center justify-center rounded-full bg-[#132945] text-white">
          <Layers size={34} strokeWidth={1.5} />
        </button>
      </div>

      <a
        href="#mapbox"
        className="absolute bottom-0.5 left-2.5 flex items-center gap-1 text-[32px] leading-10 font-bold text-white [paint-order:stroke] [-webkit-text-stroke:5px_#4b5658]"
      >
        <svg viewBox="0 0 40 40" className="size-10">
          <circle cx="20" cy="20" r="18.500" fill="#f4f7f7" stroke="#4b5658" strokeWidth="3" />
          <path d="M10.500 29.500C10 20 11 10 21 10a9 9 0 0 1 8 10c0 8-9 10-18.500 9.500Z" fill="#4b5658" />
          <path d="M22 13l1.700 4.300L28 19l-4.300 1.700L22 25l-1.700-4.300L16 19l4.300-1.700Z" fill="#ffffff" />
        </svg>
        <span className="pb-1">mapbox</span>
      </a>

      <div className="absolute right-3 bottom-1.5 flex gap-[5px] font-['Noto_Sans',sans-serif] text-[22px] leading-9 text-black">
        <span>Mapbox ©</span>
        <a href="#about" className="underline decoration-1 underline-offset-4">Mapbox</a>
        <span>©</span>
        <a href="#osm" className="underline decoration-1 underline-offset-4">OpenStreetMap</a>
        <a href="#improve" className="underline decoration-1 underline-offset-4">Improve this map</a>
      </div>
    </section>
  );
}

function Tabs() {
  const tabs = ["Overview", "Scorecard Prioritization", "Key costs"];
  return (
    <div className="flex h-16 overflow-hidden rounded-full border-2 border-[#1c4258] text-[29px]">
      {tabs.map((tab) => (
        <button
          key={tab}
          type="button"
          className={clsx("px-8", tab === "Scorecard Prioritization" ? "bg-[#1a3a60] text-[#e9f6ff]" : "text-[#c3dbf8]")}
        >
          {tab}
        </button>
      ))}
    </div>
  );
}

function SortIcon() {
  return (
    <svg viewBox="0 0 14 22" className="h-[22px] w-3.5 shrink-0" fill="#c3dbf8" aria-hidden="true">
      <path d="M7 0L14 8H0ZM7 22L0 14H14Z" />
    </svg>
  );
}

function HeaderCell({ lines, className }: { lines: string[]; className: string }) {
  return (
    <th className={clsx("h-28 border-r-2 border-[#10233c] p-0 font-normal", className)}>
      <button type="button" className="flex w-full items-center justify-between pr-4 text-left text-2xl leading-6">
        <span>
          {lines.map((line) => (
            <span key={line} className="block whitespace-nowrap">
              {line}
            </span>
          ))}
        </span>
        <SortIcon />
      </button>
    </th>
  );
}

function ProjectsTable() {
  return (
    <table className="w-full table-fixed border-separate border-spacing-0">
      <thead className="bg-[#122742] text-[#c3dbf8]">
        <tr>
          <HeaderCell lines={["Project"]} className="w-[500px] pl-[22px]" />
          {COLUMNS.map((lines, i) => (
            <HeaderCell
              key={lines.join(" ")}
              lines={lines}
              className={i === COLUMNS.length - 1 ? "pl-4" : "w-[243px] pl-4"}
            />
          ))}
        </tr>
      </thead>
      <tbody>
        {PROJECTS.map((project, row) => (
          <tr key={row}>
            <td
              className={clsx(
                "h-20 truncate pt-1 pb-0 pl-[22px] text-[#e9f6ff]",
                row > 0 && "border-b-2 border-[#1d3f5a]",
              )}
            >
              {project.name}
            </td>
            {project.scores.map((score, i) => (
              <td
                key={i}
                className={clsx(
                  "h-20 border-r-2 border-b-2 border-[#16324a] px-0 pt-1 pb-0 text-center text-[#172f47] last:border-r-0",
                  RATING_CLASS[score],
                )}
              >
                {score}
              </td>
            ))}
          </tr>
        ))}
      </tbody>
    </table>
  );
}

function TablePanel() {
  return (
    <section className="relative flex min-h-0 flex-1 flex-col border-x-2 border-t-2 border-[#1b3d5c]">
      <button
        type="button"
        aria-label="Resize panels"
        className="absolute -top-3 left-1/2 flex h-6 w-10 -translate-x-1/2 items-center justify-center rounded-lg border-2 border-[#1b4a66] bg-[#f0faff]"
      >
        <svg viewBox="0 0 18 12" className="h-3 w-[18px]" fill="#143457">
          <circle cx="3" cy="3" r="2" />
          <circle cx="9" cy="3" r="2" />
          <circle cx="15" cy="3" r="2" />
          <circle cx="3" cy="9" r="2" />
          <circle cx="9" cy="9" r="2" />
          <circle cx="15" cy="9" r="2" />
        </svg>
      </button>

      <div className="grid shrink-0 grid-cols-[1fr_auto_1fr] items-center px-7 pt-6 pb-[18px] text-[#c3dbf8]">
        <label className="flex items-center gap-[18px] pl-3.5">
          <svg viewBox="0 0 32 32" className="size-8 text-white" fill="none" stroke="currentColor" strokeWidth="2">
            <circle cx="15" cy="15" r="13.500" />
            <path d="M24.500 24.500L31 31" />
          </svg>
          <input
            type="search"
            aria-label="Search"
            placeholder="Search"
            className="w-96 bg-transparent text-[29px] outline-none placeholder:text-[#c3dbf8] placeholder:opacity-100"
          />
        </label>
        <Tabs />
        <button type="button" className="flex items-center justify-end gap-6">
          Table details
          <Info size={36} strokeWidth={1.5} className="text-[#e9f6ff]" />
        </button>
      </div>

      <div className="min-h-0 flex-1 overflow-y-auto [scrollbar-width:none]">
        <ProjectsTable />
      </div>
    </section>
  );
}

export default function App() {
  return (
    <div className="flex h-screen overflow-hidden bg-[#0e2138] font-['Roboto',sans-serif] text-[28px] leading-9">
      <Sidebar />
      <main className="flex min-w-0 flex-1 flex-col px-8">
        <header className="flex h-36 shrink-0 items-center">
          <button type="button" aria-label="Open sidebar" className="ml-5 text-[#e9f6ff]">
            <PanelLeftOpen size={40} strokeWidth={1.25} />
          </button>
          <h1 className="ml-9 pt-0.5 text-[50px] leading-[60px] font-medium text-[#e9f6ff]">Projects Overview</h1>
          <button
            type="button"
            className="ml-[68px] flex h-20 items-center gap-4 rounded-full bg-[#6bd9f4] px-8 text-[29px] text-[#143457]"
          >
            <Settings2 size={34} strokeWidth={1.75} />
            Filters
          </button>
        </header>
        <div className="flex min-h-0 flex-1 flex-col">
          <MapPanel />
          <TablePanel />
        </div>
      </main>
    </div>
  );
}
